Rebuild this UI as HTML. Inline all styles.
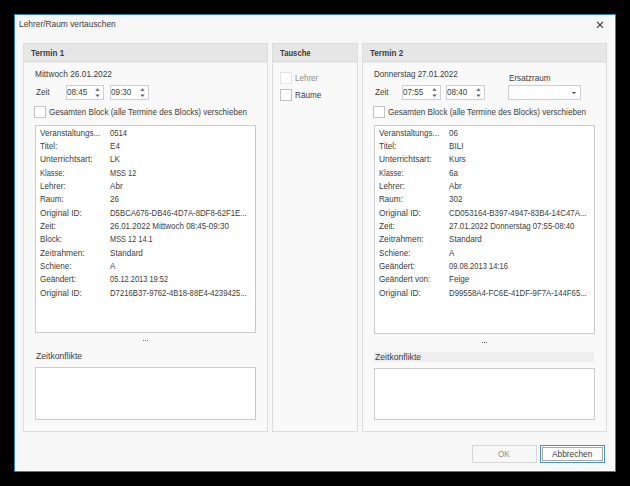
<!DOCTYPE html>
<html><head><meta charset="utf-8"><style>
html,body{margin:0;padding:0;width:630px;height:486px;overflow:hidden;background:#000}
.r{position:absolute}
.t{position:absolute;white-space:nowrap;font-family:"Liberation Sans",sans-serif;font-size:9.0px;line-height:12px;color:#3d3d3d;transform-origin:0 0;transform:scaleX(0.9)}
</style></head><body>
<div class="r" style="left:14px;top:14px;width:602px;height:458px;background:#f7f7f7;border:1px solid #2b7fd3;box-sizing:border-box;box-shadow:inset 0 0 0 1px #fdfdfd"></div>
<div class="t " style="left:18.5px;top:18px;transform:scaleX(0.93);">Lehrer/Raum vertauschen</div>
<svg class="r" style="left:596px;top:21px" width="9" height="9" viewBox="0 0 9 9"><path d="M1 0.9L7 6.9M7 0.9L1 6.9" stroke="#3a3a3a" stroke-width="1.15"/></svg>
<div class="r" style="left:23px;top:43px;width:245px;height:389px;border:1px solid #dcdcdc;box-sizing:border-box;background:#f9f9f9"></div>
<div class="r" style="left:23px;top:43px;width:245px;height:19px;border:1px solid #dcdcdc;box-sizing:border-box;background:#e6e6e6"></div>
<div class="r" style="left:24px;top:62px;width:243px;height:1px;background:#ececec"></div>
<div class="t " style="left:30.5px;top:47px;transform:scaleX(0.9);font-weight:bold;">Termin 1</div>
<div class="r" style="left:272px;top:43px;width:86px;height:389px;border:1px solid #dcdcdc;box-sizing:border-box;background:#f9f9f9"></div>
<div class="r" style="left:272px;top:43px;width:86px;height:19px;border:1px solid #dcdcdc;box-sizing:border-box;background:#e6e6e6"></div>
<div class="r" style="left:273px;top:62px;width:84px;height:1px;background:#ececec"></div>
<div class="t " style="left:279.5px;top:47px;transform:scaleX(0.855);font-weight:bold;">Tausche</div>
<div class="r" style="left:362px;top:43px;width:245px;height:389px;border:1px solid #dcdcdc;box-sizing:border-box;background:#f9f9f9"></div>
<div class="r" style="left:362px;top:43px;width:245px;height:19px;border:1px solid #dcdcdc;box-sizing:border-box;background:#e6e6e6"></div>
<div class="r" style="left:363px;top:62px;width:243px;height:1px;background:#ececec"></div>
<div class="t " style="left:369.5px;top:47px;transform:scaleX(0.9);font-weight:bold;">Termin 2</div>
<div class="t " style="left:35px;top:68px;transform:scaleX(0.927);">Mittwoch 26.01.2022</div>
<div class="t " style="left:36px;top:86px;">Zeit</div>
<div class="r" style="left:66px;top:85px;width:38px;height:15px;border:1px solid #cfcfcf;box-sizing:border-box;background:#fff"></div>
<div class="t " style="left:67px;top:86px;">08:45</div>
<svg class="r" style="left:94px;top:87px" width="7" height="12" viewBox="0 0 7 12"><path d="M1.3 3.7H5.7L3.5 1.2ZM1.3 7.4H5.7L3.5 9.9Z" fill="#606060"/></svg>
<div class="r" style="left:110px;top:85px;width:39px;height:15px;border:1px solid #cfcfcf;box-sizing:border-box;background:#fff"></div>
<div class="t " style="left:111px;top:86px;">09:30</div>
<svg class="r" style="left:139px;top:87px" width="7" height="12" viewBox="0 0 7 12"><path d="M1.3 3.7H5.7L3.5 1.2ZM1.3 7.4H5.7L3.5 9.9Z" fill="#606060"/></svg>
<div class="r" style="left:34px;top:106px;width:12px;height:12px;border:1px solid #c4c4c4;box-sizing:border-box;background:#fff"></div>
<div class="t " style="left:49px;top:106px;">Gesamten Block (alle Termine des Blocks) verschieben</div>
<div class="r" style="left:35px;top:125px;width:221px;height:208px;border:1px solid #cccccc;box-sizing:border-box;background:#fff"></div>
<div class="t " style="left:39.5px;top:127px;">Veranstaltungs...</div>
<div class="t " style="left:110px;top:127px;transform:scaleX(0.85);">0514</div>
<div class="t " style="left:39.5px;top:140px;">Titel:</div>
<div class="t " style="left:110px;top:140px;">E4</div>
<div class="t " style="left:39.5px;top:153px;transform:scaleX(0.93);">Unterrichtsart:</div>
<div class="t " style="left:110px;top:153px;">LK</div>
<div class="t " style="left:39.5px;top:167px;transform:scaleX(0.83);">Klasse:</div>
<div class="t " style="left:110px;top:167px;transform:scaleX(0.82);">MSS 12</div>
<div class="t " style="left:39.5px;top:180px;">Lehrer:</div>
<div class="t " style="left:110px;top:180px;">Abr</div>
<div class="t " style="left:39.5px;top:193px;">Raum:</div>
<div class="t " style="left:110px;top:193px;">26</div>
<div class="t " style="left:39.5px;top:207px;transform:scaleX(0.93);">Original ID:</div>
<div class="t " style="left:110px;top:207px;transform:scaleX(0.865);">D5BCA676-DB46-4D7A-8DF8-62F1E...</div>
<div class="t " style="left:39.5px;top:220px;">Zeit:</div>
<div class="t " style="left:110px;top:220px;transform:scaleX(0.89);">26.01.2022 Mittwoch 08:45-09:30</div>
<div class="t " style="left:39.5px;top:233px;">Block:</div>
<div class="t " style="left:110px;top:233px;transform:scaleX(0.82);">MSS 12 14.1</div>
<div class="t " style="left:39.5px;top:247px;transform:scaleX(0.93);">Zeitrahmen:</div>
<div class="t " style="left:110px;top:247px;">Standard</div>
<div class="t " style="left:39.5px;top:260px;">Schiene:</div>
<div class="t " style="left:110px;top:260px;">A</div>
<div class="t " style="left:39.5px;top:273px;">Geändert:</div>
<div class="t " style="left:110px;top:273px;transform:scaleX(0.83);">05.12.2013 19:52</div>
<div class="t " style="left:39.5px;top:287px;transform:scaleX(0.93);">Original ID:</div>
<div class="t " style="left:110px;top:287px;transform:scaleX(0.86);">D7216B37-9762-4B18-88E4-4239425...</div>
<div class="r" style="left:143px;top:340px;width:1px;height:1px;background:#666"></div>
<div class="r" style="left:145px;top:340px;width:1px;height:1px;background:#666"></div>
<div class="r" style="left:147px;top:340px;width:1px;height:1px;background:#666"></div>
<div class="t " style="left:36px;top:350px;transform:scaleX(0.96);">Zeitkonflikte</div>
<div class="r" style="left:35px;top:367px;width:221px;height:53px;border:1px solid #cccccc;box-sizing:border-box;background:#fff"></div>
<div class="t " style="left:374px;top:68px;transform:scaleX(0.89);">Donnerstag 27.01.2022</div>
<div class="t " style="left:375px;top:86px;">Zeit</div>
<div class="r" style="left:402px;top:85px;width:39px;height:15px;border:1px solid #cfcfcf;box-sizing:border-box;background:#fff"></div>
<div class="t " style="left:403px;top:86px;">07:55</div>
<svg class="r" style="left:431px;top:87px" width="7" height="12" viewBox="0 0 7 12"><path d="M1.3 3.7H5.7L3.5 1.2ZM1.3 7.4H5.7L3.5 9.9Z" fill="#606060"/></svg>
<div class="r" style="left:446px;top:85px;width:39px;height:15px;border:1px solid #cfcfcf;box-sizing:border-box;background:#fff"></div>
<div class="t " style="left:447px;top:86px;">08:40</div>
<svg class="r" style="left:475px;top:87px" width="7" height="12" viewBox="0 0 7 12"><path d="M1.3 3.7H5.7L3.5 1.2ZM1.3 7.4H5.7L3.5 9.9Z" fill="#606060"/></svg>
<div class="r" style="left:373px;top:106px;width:12px;height:12px;border:1px solid #c4c4c4;box-sizing:border-box;background:#fff"></div>
<div class="t " style="left:388px;top:106px;">Gesamten Block (alle Termine des Blocks) verschieben</div>
<div class="r" style="left:374px;top:125px;width:221px;height:209px;border:1px solid #cccccc;box-sizing:border-box;background:#fff"></div>
<div class="t " style="left:378.5px;top:127px;">Veranstaltungs...</div>
<div class="t " style="left:449px;top:127px;">06</div>
<div class="t " style="left:378.5px;top:140px;">Titel:</div>
<div class="t " style="left:449px;top:140px;">BILI</div>
<div class="t " style="left:378.5px;top:153px;transform:scaleX(0.93);">Unterrichtsart:</div>
<div class="t " style="left:449px;top:153px;">Kurs</div>
<div class="t " style="left:378.5px;top:167px;transform:scaleX(0.83);">Klasse:</div>
<div class="t " style="left:449px;top:167px;">6a</div>
<div class="t " style="left:378.5px;top:180px;">Lehrer:</div>
<div class="t " style="left:449px;top:180px;">Abr</div>
<div class="t " style="left:378.5px;top:193px;">Raum:</div>
<div class="t " style="left:449px;top:193px;">302</div>
<div class="t " style="left:378.5px;top:207px;transform:scaleX(0.93);">Original ID:</div>
<div class="t " style="left:449px;top:207px;transform:scaleX(0.875);">CD053164-B397-4947-83B4-14C47A...</div>
<div class="t " style="left:378.5px;top:220px;">Zeit:</div>
<div class="t " style="left:449px;top:220px;transform:scaleX(0.867);">27.01.2022 Donnerstag 07:55-08:40</div>
<div class="t " style="left:378.5px;top:233px;transform:scaleX(0.93);">Zeitrahmen:</div>
<div class="t " style="left:449px;top:233px;">Standard</div>
<div class="t " style="left:378.5px;top:247px;">Schiene:</div>
<div class="t " style="left:449px;top:247px;">A</div>
<div class="t " style="left:378.5px;top:260px;">Geändert:</div>
<div class="t " style="left:449px;top:260px;transform:scaleX(0.84);">09.08.2013 14:16</div>
<div class="t " style="left:378.5px;top:273px;">Geändert von:</div>
<div class="t " style="left:449px;top:273px;">Feige</div>
<div class="t " style="left:378.5px;top:287px;transform:scaleX(0.93);">Original ID:</div>
<div class="t " style="left:449px;top:287px;transform:scaleX(0.866);">D99558A4-FC6E-41DF-9F7A-144F65...</div>
<div class="r" style="left:482px;top:342px;width:1px;height:1px;background:#666"></div>
<div class="r" style="left:484px;top:342px;width:1px;height:1px;background:#666"></div>
<div class="r" style="left:486px;top:342px;width:1px;height:1px;background:#666"></div>
<div class="r" style="left:374px;top:352px;width:220px;height:10px;background:#eeeeee"></div>
<div class="t " style="left:375px;top:351px;transform:scaleX(0.96);">Zeitkonflikte</div>
<div class="r" style="left:374px;top:368px;width:221px;height:52px;border:1px solid #cccccc;box-sizing:border-box;background:#fff"></div>
<div class="t " style="left:508.5px;top:72px;">Ersatzraum</div>
<div class="r" style="left:508px;top:85px;width:73px;height:15px;border:1px solid #cfcfcf;box-sizing:border-box;background:#fff"></div>
<svg class="r" style="left:571px;top:91px" width="6" height="4" viewBox="0 0 6 4"><path d="M0.6 0.9H5.2L2.9 3.2Z" fill="#5a5a5a"/></svg>
<div class="r" style="left:280px;top:72px;width:12px;height:12px;border:1px solid #e4e4e4;box-sizing:border-box;background:#fff"></div>
<div class="t " style="left:294.5px;top:72px;color:#8e8e8e;transform:scaleX(0.895);">Lehrer</div>
<div class="r" style="left:280px;top:89px;width:12px;height:12px;border:1px solid #c0c0c0;box-sizing:border-box;background:#fff"></div>
<div class="t " style="left:294.5px;top:89px;transform:scaleX(0.905);">Räume</div>
<div class="r" style="left:472px;top:445px;width:65px;height:18px;border:1px solid #d6d6d6;box-sizing:border-box;background:#f7f7f7"></div>
<div class="t " style="left:497.5px;top:448px;color:#8c8c8c;">OK</div>
<div class="r" style="left:540px;top:445px;width:65px;height:18px;border:1px solid #4a8fdc;box-sizing:border-box;background:#fff"></div>
<div class="r" style="left:542px;top:447px;width:61px;height:14px;border:1px solid #a8a8a8;box-sizing:border-box;background:#fff"></div>
<div class="t " style="left:551.5px;top:448px;transform:scaleX(0.925);">Abbrechen</div>
</body></html>
